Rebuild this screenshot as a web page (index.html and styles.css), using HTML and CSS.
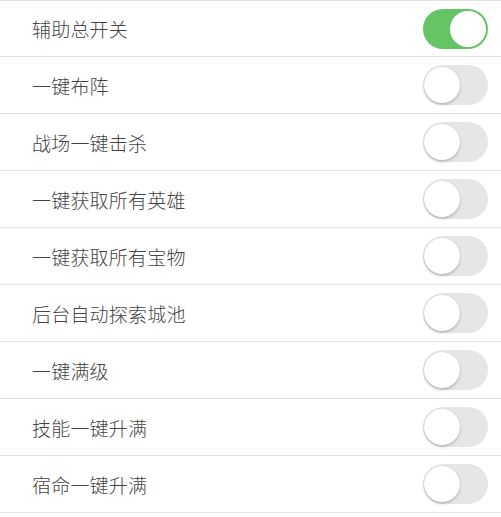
FILE: index.html
```html
<!DOCTYPE html>
<html lang="zh-CN">
<head>
    <meta charset="UTF-8" />
    <title>辅助设置</title>
    <link rel="stylesheet" href="styles.css">
</head>
<body>
    <ul class="settings">
        <li class="row">
            <span class="label">辅助总开关</span>
            <label class="switch"><input type="checkbox" checked><span class="track"></span></label>
        </li>
        <li class="row">
            <span class="label">一键布阵</span>
            <label class="switch"><input type="checkbox"><span class="track"></span></label>
        </li>
        <li class="row">
            <span class="label">战场一键击杀</span>
            <label class="switch"><input type="checkbox"><span class="track"></span></label>
        </li>
        <li class="row">
            <span class="label">一键获取所有英雄</span>
            <label class="switch"><input type="checkbox"><span class="track"></span></label>
        </li>
        <li class="row">
            <span class="label">一键获取所有宝物</span>
            <label class="switch"><input type="checkbox"><span class="track"></span></label>
        </li>
        <li class="row">
            <span class="label">后台自动探索城池</span>
            <label class="switch"><input type="checkbox"><span class="track"></span></label>
        </li>
        <li class="row">
            <span class="label">一键满级</span>
            <label class="switch"><input type="checkbox"><span class="track"></span></label>
        </li>
        <li class="row">
            <span class="label">技能一键升满</span>
            <label class="switch"><input type="checkbox"><span class="track"></span></label>
        </li>
        <li class="row">
            <span class="label">宿命一键升满</span>
            <label class="switch"><input type="checkbox"><span class="track"></span></label>
        </li>
    </ul>
</body>
</html>
```

FILE: styles.css
```css
/* Geral */
body {
    margin: 0;
    background-color: #fff;
    font-family: "Noto Sans CJK SC", "Liberation Sans", sans-serif;
}

/* Lista de opções */
.settings {
    list-style: none;
    margin: 0;
    padding: 0;
    border-top: 1px solid #e3e3e3;
}

.row {
    display: flex;
    align-items: center;
    justify-content: space-between;
    height: 56px;
    padding: 0 13px 0 32px;
    border-bottom: 1px solid #e3e3e3;
}

.row:first-child {
    height: 55px;
}

.label {
    font-size: 19px;
    font-weight: 300;
    color: #444;
    letter-spacing: 0.2px;
}

/* Interruptor */
.switch {
    position: relative;
    display: block;
    width: 65px;
    height: 40px;
}

.switch input {
    display: none;
}

.track {
    display: block;
    width: 100%;
    height: 100%;
    border-radius: 20px;
    background-color: #e6e6e6;
    transition: background-color 0.3s ease;
}

.track::after {
    content: "";
    position: absolute;
    top: 2px;
    left: 1px;
    width: 36px;
    height: 36px;
    border-radius: 50%;
    background-color: #fff;
    box-shadow: 0 2px 3px rgba(0,0,0,0.18), 0 0 1px rgba(0,0,0,0.2);
    transition: left 0.3s ease;
}

.switch input:checked + .track {
    background-color: #64c466;
}

.switch input:checked + .track::after {
    left: 27px;
    box-shadow: none;
}
```
